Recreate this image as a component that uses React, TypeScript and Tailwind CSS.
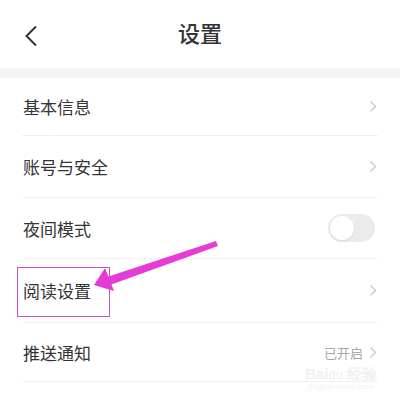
import React from "react";

const font = { fontFamily: '"Noto Sans CJK SC", "Noto Sans", sans-serif' };

function Chevron() {
  return (
    <svg width="8" height="13" viewBox="0 0 8 13" className="shrink-0">
      <polyline points="1.5,1.5 6.5,6.5 1.5,11.5" fill="none" stroke="#c9c9c9" strokeWidth="1.4" />
    </svg>
  );
}

function Row({ label, h, right, divider = true }: { label: string; h: string; right?: React.ReactNode; divider?: boolean }) {
  return (
    <div className="flex flex-col">
      <div className={`flex items-center justify-between pl-[23px] pr-[23px] ${h}`}>
        <span className="text-[17px] text-[#333333] leading-none">{label}</span>
        {right ?? <Chevron />}
      </div>
      {divider && <div className="mx-[22px] h-px bg-[#f0f0f0]" />}
    </div>
  );
}

export default function App() {
  return (
    <div className="relative w-[400px] h-[400px] overflow-hidden bg-white" style={font}>
      <div className="relative flex h-[68px] items-center justify-center">
        <svg width="14" height="22" viewBox="0 0 14 22" className="absolute left-[24px] top-[25px]">
          <polyline points="12,1.5 2.5,11 12,20.5" fill="none" stroke="#333" strokeWidth="2" />
        </svg>
        <span className="text-[22px] font-medium text-[#333333] leading-none -mt-[4px]">设置</span>
      </div>
      <div className="h-[10px] bg-[#f4f4f4]" />
      <Row label="基本信息" h="h-[57px]" />
      <Row label="账号与安全" h="h-[61px]" />
      <Row
        label="夜间模式"
        h="h-[60px]"
        right={
          <div className="relative h-[28px] w-[47px] rounded-full bg-[#ebebeb] mr-[2px]">
            <div className="absolute left-[2px] top-[2px] h-[24px] w-[24px] rounded-full bg-white shadow-[0_1px_2px_rgba(0,0,0,0.08)]" />
          </div>
        }
      />
      <Row label="阅读设置" h="h-[63px]" />
      <Row
        label="推送通知"
        h="h-[58px]"
        right={
          <div className="flex items-center gap-[6px]">
            <span className="text-[13px] text-[#a8a8a8] leading-none">已开启</span>
            <Chevron />
          </div>
        }
      />

      {/* highlight box */}
      <div className="absolute left-[17px] top-[267px] h-[50px] w-[93px] border-[1.5px] border-[#d24fc2]" />

      {/* arrow */}
      <svg className="absolute left-0 top-0" width="400" height="400" viewBox="0 0 400 400">
        <polygon points="216,241 218,246 110,285 107,277" fill="#e63bd6" />
        <polygon points="94,285 105,268 114,291" fill="#e63bd6" />
      </svg>

      {/* watermark */}
      <div className="absolute left-[305px] top-[366px] flex flex-col items-center leading-none opacity-50">
        <span className="text-[15px] font-bold text-[#e4e4e4]" style={{ fontFamily: '"Liberation Sans", sans-serif' }}>
          Bai<span className="text-[12px]">du</span> 经验
        </span>
        <span className="mt-[2px] text-[8px] text-[#e8e8e8]" style={{ fontFamily: '"Liberation Sans", sans-serif' }}>
          jingyan.baidu.com
        </span>
      </div>
    </div>
  );
}
